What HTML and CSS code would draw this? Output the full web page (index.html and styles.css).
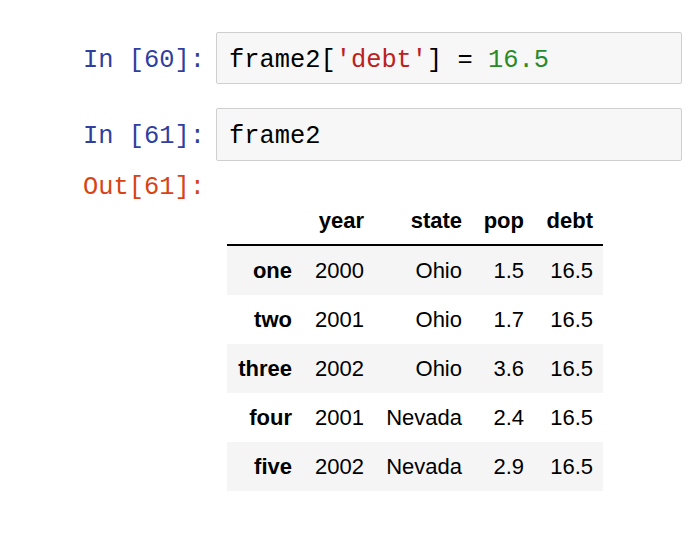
FILE: index.html
```html
<!DOCTYPE html>
<html>
<head>
<meta charset="utf-8">
<link rel="stylesheet" href="styles.css">
</head>
<body>
<div class="notebook">
  <div class="cell cell-first">
    <div class="prompt prompt-in">In&nbsp;[60]:</div>
    <div class="input"><span>frame2[</span><span class="str">'debt'</span><span>] = </span><span class="num">16.5</span></div>
  </div>
  <div class="cell cell-second">
    <div class="prompt prompt-in">In&nbsp;[61]:</div>
    <div class="input">frame2</div>
  </div>
  <div class="cell cell-out">
    <div class="prompt prompt-out">Out[61]:</div>
    <table class="df">
      <thead>
        <tr>
          <th class="c-idx"></th>
          <th class="c-year">year</th>
          <th class="c-state">state</th>
          <th class="c-pop">pop</th>
          <th class="c-debt">debt</th>
        </tr>
      </thead>
      <tbody>
        <tr class="odd"><th>one</th><td>2000</td><td>Ohio</td><td>1.5</td><td>16.5</td></tr>
        <tr><th>two</th><td>2001</td><td>Ohio</td><td>1.7</td><td>16.5</td></tr>
        <tr class="odd"><th>three</th><td>2002</td><td>Ohio</td><td>3.6</td><td>16.5</td></tr>
        <tr><th>four</th><td>2001</td><td>Nevada</td><td>2.4</td><td>16.5</td></tr>
        <tr class="odd"><th>five</th><td>2002</td><td>Nevada</td><td>2.9</td><td>16.5</td></tr>
      </tbody>
    </table>
  </div>
</div>
</body>
</html>
```
FILE: styles.css
```css
html, body {
  margin: 0;
  padding: 0;
  background: #ffffff;
}

.notebook {
  padding-top: 32px;
  width: 700px;
}

.cell {
  display: flex;
  align-items: flex-start;
}

.cell-second {
  margin-top: 24px;
}

.cell-out {
  margin-top: 12px;
}

.prompt {
  width: 205px;
  margin-right: 11px;
  text-align: right;
  font-family: "Liberation Mono", "Courier New", monospace;
  font-size: 25.4px;
  line-height: 30px;
  flex: none;
}

.prompt-in {
  color: #303f9f;
  padding-top: 14px;
}

.prompt-out {
  color: #d84315;
}

.input {
  flex: 1;
  margin-right: 18px;
  border: 1px solid #cfcfcf;
  border-radius: 2px;
  background: #f7f7f7;
  padding: 13px 12px 7px;
  font-family: "Liberation Mono", "Courier New", monospace;
  font-size: 25.4px;
  line-height: 30px;
  color: #000;
  white-space: pre;
}

.cell-second .input {
  padding-bottom: 8px;
}

.str {
  color: #ba2121;
}

.num {
  color: #2a8a2a;
}

.df {
  margin-top: 23px;
  margin-left: 11px;
  border-collapse: separate;
  border-spacing: 0;
  font-family: "Liberation Sans", Arial, sans-serif;
  font-size: 22px;
  color: #000;
}

.df th, .df td {
  text-align: right;
  padding: 12px 10px;
  line-height: 25px;
  white-space: nowrap;
}

.df th {
  font-weight: bold;
}

.df thead th {
  border-bottom: 2px solid #000;
  padding-top: 13px;
  padding-bottom: 11px;
  line-height: 24px;
}

.c-idx { width: 55px; }
.c-year { width: 52px; }
.c-state { width: 78px; }
.c-pop { width: 42px; }
.c-debt { width: 49px; }

.df tbody tr.odd {
  background: #f5f5f5;
}
```
